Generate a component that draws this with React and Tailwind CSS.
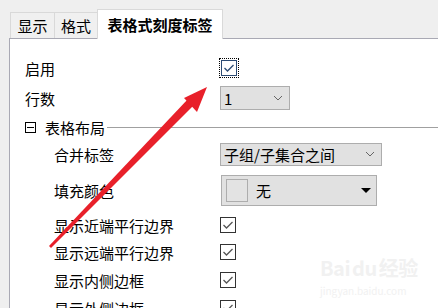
import React from 'react';

const font = { fontFamily: '"Noto Sans CJK SC", "Noto Sans", sans-serif' };

function Check({ focus }) {
  const box = (
    <div className={`w-[16px] h-[16px] bg-white border flex items-center justify-center ${focus ? 'border-[#2b4a73]' : 'border-[#333]'}`}>
      <svg width="12" height="10" viewBox="0 0 12 10">
        <path d="M1.5 5 L4.5 8 L10.5 2" fill="none" stroke={focus ? '#2b4a73' : '#555'} strokeWidth="1.3" />
      </svg>
    </div>
  );
  if (!focus) return box;
  return <div className="p-[1px] border border-dotted border-black -ml-[1px]">{box}</div>;
}

function Chevron() {
  return (
    <svg width="10" height="6" viewBox="0 0 10 6">
      <path d="M1 1 L5 5 L9 1" fill="none" stroke="#666" strokeWidth="1" />
    </svg>
  );
}

function Row({ label, sub, h, children }) {
  return (
    <div className="flex items-center" style={{ height: h }}>
      <div className={`w-[210px] shrink-0 ${sub ? 'pl-[44px]' : 'pl-[15px]'}`}>{label}</div>
      {children}
    </div>
  );
}

export default function App() {
  return (
    <div className="relative w-[438px] h-[308px] overflow-hidden bg-[#efefef] text-[15px] text-black leading-none" style={font}>
      <div className="flex items-end h-[38px] pl-[10px]">
        <div className="h-[26px] w-[44px] flex items-center justify-center border-t border-l border-[#d9d9d9] bg-[#f0f0f0]">显示</div>
        <div className="h-[26px] w-[43px] flex items-center justify-center border-t border-l border-[#d9d9d9] bg-[#f0f0f0]">格式</div>
        <div className="h-[30px] w-[126px] flex items-center justify-center border-t border-x border-[#d9d9d9] bg-white font-bold relative top-[1px] z-10">表格式刻度标签</div>
      </div>
      <div className="ml-[9px] border-t border-l border-[#a9a9b4] bg-white h-[270px]">
        <div className="h-[17px]" />
        <Row label="启用" h={24}>
          <Check focus />
        </Row>
        <Row label="行数" h={36}>
          <div className="w-[70px] h-[24px] bg-[#e1e1e1] border border-[#adadad] flex items-center justify-between pl-[3px] pr-[6px]">
            <span>1</span>
            <Chevron />
          </div>
        </Row>
        <div className="flex items-center h-[22px] pl-[15px]">
          <div className="w-[11px] h-[11px] border border-black flex items-center justify-center">
            <div className="w-[7px] h-px bg-black" />
          </div>
          <span className="ml-[9px]">表格布局</span>
          <div className="flex-1 h-px bg-[#a0a0a0] ml-[2px]" />
        </div>
        <Row label="合并标签" sub h={32}>
          <div className="w-[162px] h-[23px] bg-[#e1e1e1] border border-[#adadad] flex items-center justify-between pl-[3px] pr-[6px]">
            <span>子组/子集合之间</span>
            <Chevron />
          </div>
        </Row>
        <Row label="填充颜色" sub h={40}>
          <div className="ml-[1px] w-[156px] h-[31px] bg-[#e1e1e1] border border-[#adadad] flex items-center pl-[4px] pr-[4px]">
            <div className="w-[22px] h-[23px] border border-[#adadad] bg-[#e3e3e3]" />
            <span className="ml-[8px] flex-1">无</span>
            <svg width="10" height="5" viewBox="0 0 10 5" className="mr-[1px]">
              <path d="M0 0 L10 0 L5 5 Z" fill="#000" />
            </svg>
          </div>
        </Row>
        <Row label="显示近端平行边界" sub h={30}><Check /></Row>
        <Row label="显示远端平行边界" sub h={24}><Check /></Row>
        <Row label="显示内侧边框" sub h={32}><Check /></Row>
        <Row label="显示外侧边框" sub h={24}><Check /></Row>
      </div>

      <div className="absolute left-[320px] top-[258px] text-[#f1f1f1] leading-none pointer-events-none">
        <div className="text-[20px] font-bold tracking-tight">Bai<span className="mx-[2px]">du</span>经验</div>
        <div className="text-[10px] mt-[8px]">jingyan.baidu.com</div>
      </div>

      <svg className="absolute left-0 top-0 pointer-events-none" width="438" height="308" viewBox="0 0 438 308">
        <polygon points="49,246 51,248 194,105 188,99" fill="#e8202a" />
        <polygon points="207,87 184,98 197,112" fill="#e8202a" />
      </svg>
    </div>
  );
}
